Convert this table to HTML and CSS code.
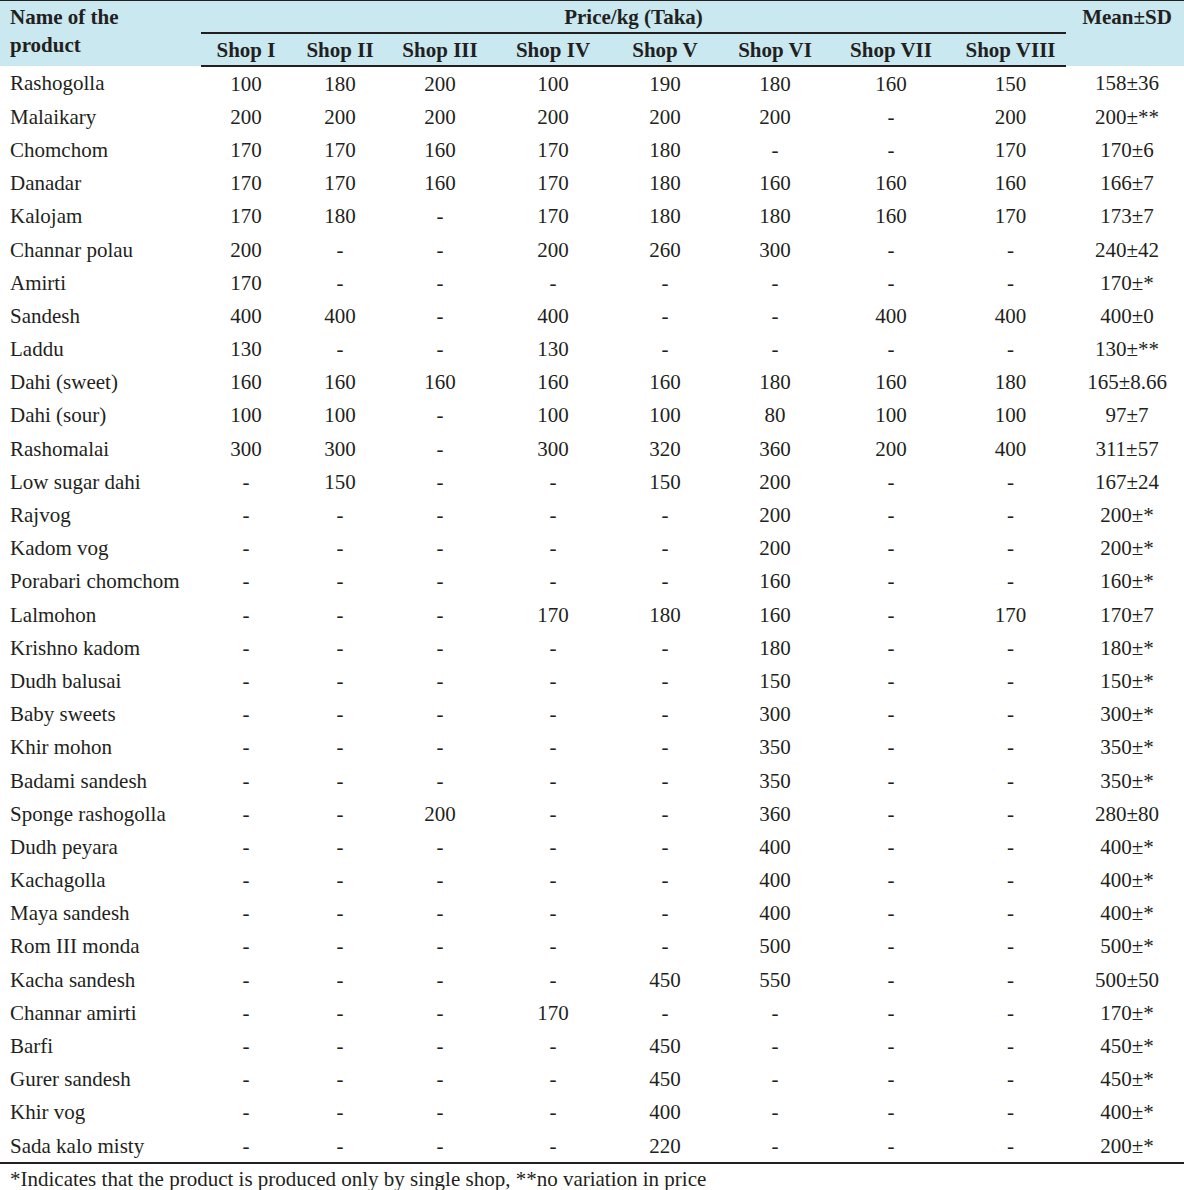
FILE: index.html
```html
<!DOCTYPE html>
<html>
<head>
<meta charset="utf-8">
<link rel="stylesheet" href="styles.css">
</head>
<body>
<table class="tbl">
<colgroup>
<col class="c-name"><col class="c1"><col class="c2"><col class="c3"><col class="c4"><col class="c5"><col class="c6"><col class="c7"><col class="c8"><col class="c-mean">
</colgroup>
<thead>
<tr class="h1">
<th rowspan="2" class="hname">Name of the<br>product</th>
<th colspan="8" class="hprice">Price/kg (Taka)</th>
<th rowspan="2" class="hmean">Mean±SD</th>
</tr>
<tr class="h2">
<th>Shop I</th><th>Shop II</th><th>Shop III</th><th>Shop IV</th><th>Shop V</th><th>Shop VI</th><th>Shop VII</th><th>Shop VIII</th>
</tr>
</thead>
<tbody>
<tr><td>Rashogolla</td><td>100</td><td>180</td><td>200</td><td>100</td><td>190</td><td>180</td><td>160</td><td>150</td><td>158±36</td></tr>
<tr><td>Malaikary</td><td>200</td><td>200</td><td>200</td><td>200</td><td>200</td><td>200</td><td>-</td><td>200</td><td>200±**</td></tr>
<tr><td>Chomchom</td><td>170</td><td>170</td><td>160</td><td>170</td><td>180</td><td>-</td><td>-</td><td>170</td><td>170±6</td></tr>
<tr><td>Danadar</td><td>170</td><td>170</td><td>160</td><td>170</td><td>180</td><td>160</td><td>160</td><td>160</td><td>166±7</td></tr>
<tr><td>Kalojam</td><td>170</td><td>180</td><td>-</td><td>170</td><td>180</td><td>180</td><td>160</td><td>170</td><td>173±7</td></tr>
<tr><td>Channar polau</td><td>200</td><td>-</td><td>-</td><td>200</td><td>260</td><td>300</td><td>-</td><td>-</td><td>240±42</td></tr>
<tr><td>Amirti</td><td>170</td><td>-</td><td>-</td><td>-</td><td>-</td><td>-</td><td>-</td><td>-</td><td>170±*</td></tr>
<tr><td>Sandesh</td><td>400</td><td>400</td><td>-</td><td>400</td><td>-</td><td>-</td><td>400</td><td>400</td><td>400±0</td></tr>
<tr><td>Laddu</td><td>130</td><td>-</td><td>-</td><td>130</td><td>-</td><td>-</td><td>-</td><td>-</td><td>130±**</td></tr>
<tr><td>Dahi (sweet)</td><td>160</td><td>160</td><td>160</td><td>160</td><td>160</td><td>180</td><td>160</td><td>180</td><td>165±8.66</td></tr>
<tr><td>Dahi (sour)</td><td>100</td><td>100</td><td>-</td><td>100</td><td>100</td><td>80</td><td>100</td><td>100</td><td>97±7</td></tr>
<tr><td>Rashomalai</td><td>300</td><td>300</td><td>-</td><td>300</td><td>320</td><td>360</td><td>200</td><td>400</td><td>311±57</td></tr>
<tr><td>Low sugar dahi</td><td>-</td><td>150</td><td>-</td><td>-</td><td>150</td><td>200</td><td>-</td><td>-</td><td>167±24</td></tr>
<tr><td>Rajvog</td><td>-</td><td>-</td><td>-</td><td>-</td><td>-</td><td>200</td><td>-</td><td>-</td><td>200±*</td></tr>
<tr><td>Kadom vog</td><td>-</td><td>-</td><td>-</td><td>-</td><td>-</td><td>200</td><td>-</td><td>-</td><td>200±*</td></tr>
<tr><td>Porabari chomchom</td><td>-</td><td>-</td><td>-</td><td>-</td><td>-</td><td>160</td><td>-</td><td>-</td><td>160±*</td></tr>
<tr><td>Lalmohon</td><td>-</td><td>-</td><td>-</td><td>170</td><td>180</td><td>160</td><td>-</td><td>170</td><td>170±7</td></tr>
<tr><td>Krishno kadom</td><td>-</td><td>-</td><td>-</td><td>-</td><td>-</td><td>180</td><td>-</td><td>-</td><td>180±*</td></tr>
<tr><td>Dudh balusai</td><td>-</td><td>-</td><td>-</td><td>-</td><td>-</td><td>150</td><td>-</td><td>-</td><td>150±*</td></tr>
<tr><td>Baby sweets</td><td>-</td><td>-</td><td>-</td><td>-</td><td>-</td><td>300</td><td>-</td><td>-</td><td>300±*</td></tr>
<tr><td>Khir mohon</td><td>-</td><td>-</td><td>-</td><td>-</td><td>-</td><td>350</td><td>-</td><td>-</td><td>350±*</td></tr>
<tr><td>Badami sandesh</td><td>-</td><td>-</td><td>-</td><td>-</td><td>-</td><td>350</td><td>-</td><td>-</td><td>350±*</td></tr>
<tr><td>Sponge rashogolla</td><td>-</td><td>-</td><td>200</td><td>-</td><td>-</td><td>360</td><td>-</td><td>-</td><td>280±80</td></tr>
<tr><td>Dudh peyara</td><td>-</td><td>-</td><td>-</td><td>-</td><td>-</td><td>400</td><td>-</td><td>-</td><td>400±*</td></tr>
<tr><td>Kachagolla</td><td>-</td><td>-</td><td>-</td><td>-</td><td>-</td><td>400</td><td>-</td><td>-</td><td>400±*</td></tr>
<tr><td>Maya sandesh</td><td>-</td><td>-</td><td>-</td><td>-</td><td>-</td><td>400</td><td>-</td><td>-</td><td>400±*</td></tr>
<tr><td>Rom III monda</td><td>-</td><td>-</td><td>-</td><td>-</td><td>-</td><td>500</td><td>-</td><td>-</td><td>500±*</td></tr>
<tr><td>Kacha sandesh</td><td>-</td><td>-</td><td>-</td><td>-</td><td>450</td><td>550</td><td>-</td><td>-</td><td>500±50</td></tr>
<tr><td>Channar amirti</td><td>-</td><td>-</td><td>-</td><td>170</td><td>-</td><td>-</td><td>-</td><td>-</td><td>170±*</td></tr>
<tr><td>Barfi</td><td>-</td><td>-</td><td>-</td><td>-</td><td>450</td><td>-</td><td>-</td><td>-</td><td>450±*</td></tr>
<tr><td>Gurer sandesh</td><td>-</td><td>-</td><td>-</td><td>-</td><td>450</td><td>-</td><td>-</td><td>-</td><td>450±*</td></tr>
<tr><td>Khir vog</td><td>-</td><td>-</td><td>-</td><td>-</td><td>400</td><td>-</td><td>-</td><td>-</td><td>400±*</td></tr>
<tr><td>Sada kalo misty</td><td>-</td><td>-</td><td>-</td><td>-</td><td>220</td><td>-</td><td>-</td><td>-</td><td>200±*</td></tr>
</tbody>
</table>
<p class="note">*Indicates that the product is produced only by single shop, **no variation in price</p>
</body>
</html>
```
FILE: styles.css
```css
html, body {
  margin: 0;
  padding: 0;
  background: #ffffff;
}
body {
  font-family: "Liberation Serif", "Times New Roman", serif;
  font-size: 21px;
  color: #231f20;
}
.tbl {
  width: 1184px;
  border-collapse: collapse;
  table-layout: fixed;
  border-top: 1px solid #231f20;
  border-bottom: 2px solid #231f20;
}
.c-name { width: 201px; }
.c1 { width: 90px; }
.c2 { width: 98px; }
.c3 { width: 102px; }
.c4 { width: 124px; }
.c5 { width: 100px; }
.c6 { width: 120px; }
.c7 { width: 112px; }
.c8 { width: 119px; }
.c-mean { width: 118px; }
thead th {
  background: #c9e8f0;
  font-weight: bold;
  padding: 0;
  height: 31px;
  line-height: 22px;
}
.h2 th {
  border-bottom: 2px solid #231f20;
}
.h2 th:last-child {
  padding-left: 8px;
}
.hname {
  text-align: left;
  padding-left: 10px !important;
  vertical-align: top;
  line-height: 28px !important;
  padding-top: 2px !important;
}
.hprice {
  border-bottom: 2px solid #231f20;
}
.hmean {
  vertical-align: top;
  padding-top: 5px !important;
  padding-left: 4px !important;
}
tbody td {
  text-align: center;
  padding: 0;
  height: 33.2px;
  line-height: 22px;
}
tbody td:first-child {
  text-align: left;
  padding-left: 10px;
}
tbody td:nth-child(9) {
  padding-left: 8px;
}
tbody td:last-child {
  padding-left: 4px;
}
.note {
  margin: 4px 0 0 0;
  padding-left: 10px;
  line-height: 22px;
}
```
